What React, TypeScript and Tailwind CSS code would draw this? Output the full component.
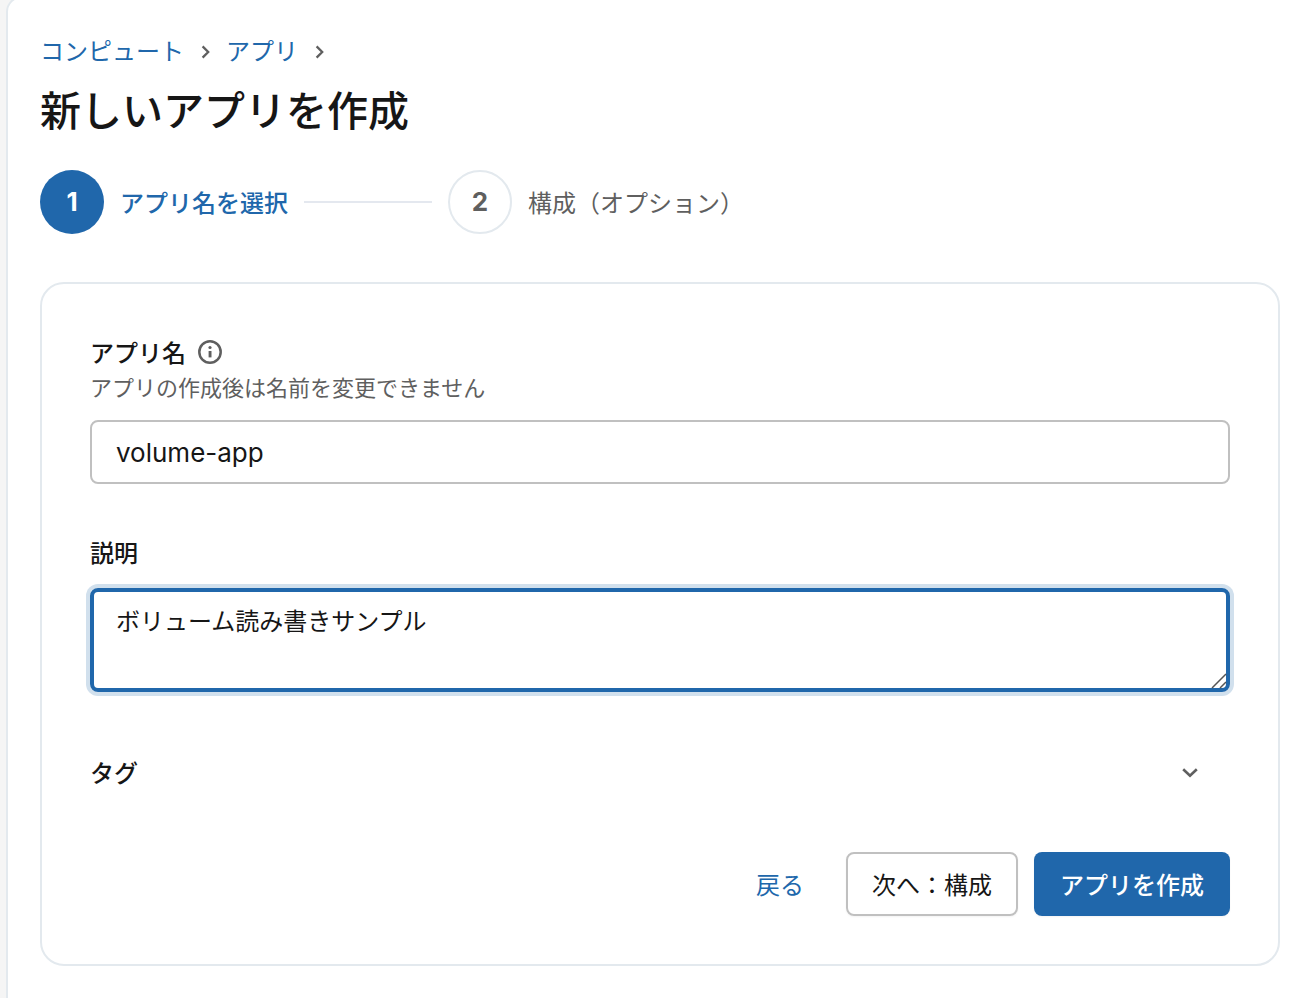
import { useState } from "react";

const steps = [
  { id: 1, label: "アプリ名を選択" },
  { id: 2, label: "構成（オプション）" },
];

const breadcrumbs = ["コンピュート", "アプリ"];

function ChevronRight() {
  return (
    <svg viewBox="0 0 24 24" className="h-6 w-6 shrink-0 text-[#5f5f5f]" fill="none" stroke="currentColor" strokeWidth="2.3" aria-hidden="true">
      <path d="m9.6 8.4 5.6 5.6-5.6 5.6" />
    </svg>
  );
}

function ChevronDown({ open }: { open: boolean }) {
  return (
    <svg
      viewBox="0 0 24 24"
      className={`h-6 w-6 shrink-0 text-[#5f5f5f] ${open ? "rotate-180" : ""}`}
      fill="none"
      stroke="currentColor"
      strokeWidth="2.6"
      aria-hidden="true"
    >
      <path d="m5.2 9.2 6.8 6.6 6.8-6.6" />
    </svg>
  );
}

function InfoIcon() {
  return (
    <svg viewBox="0 0 24 24" className="h-6 w-6 text-[#5f5f5f]" aria-hidden="true">
      <circle cx="12" cy="12" r="10.7" fill="none" stroke="currentColor" strokeWidth="2.5" />
      <circle cx="12" cy="7.5" r="1.6" fill="currentColor" />
      <path d="M10.6 11h2.9v6.4h-2.9z" fill="currentColor" />
    </svg>
  );
}

function Stepper({ current }: { current: number }) {
  return (
    <ol className="mt-9 flex items-center gap-4">
      {steps.map((step, i) => {
        const active = step.id === current;
        return (
          <li key={step.id} className="flex items-center gap-4">
            {i > 0 && <span className="h-[2px] w-32 bg-[#e4e8ef]" />}
            <span
              className={`flex h-16 w-16 shrink-0 items-center justify-center rounded-full font-[Inter,sans-serif] text-[26px] font-bold ${
                active ? "bg-[#2067ab] text-white" : "border-2 border-[#e3e9ee] text-[#5f5f5f]"
              }`}
            >
              {step.id}
            </span>
            <span className={active ? "font-medium text-[#2067ab]" : "text-[#5f5f5f]"}>{step.label}</span>
          </li>
        );
      })}
    </ol>
  );
}

export default function App() {
  const [name, setName] = useState("volume-app");
  const [description, setDescription] = useState("ボリューム読み書きサンプル");
  const [tagsOpen, setTagsOpen] = useState(false);

  return (
    <div className="flex min-h-screen overflow-hidden bg-[#f5f5f5] pl-[6px] font-['Noto_Sans_CJK_JP',sans-serif] text-2xl leading-10 text-[#161616]">
      <main className="-mt-1 min-w-0 grow rounded-tl-2xl border-t-2 border-l-2 border-[#e3e9ee] bg-white pt-8 pr-7 pb-8 pl-8">
        {/* Breadcrumb */}
        <nav aria-label="Breadcrumb" className="flex items-center">
          {breadcrumbs.map((crumb) => (
            <span key={crumb} className="flex items-center gap-[9px] pr-[9px]">
              <a href="#" className="text-[#2067ab] hover:underline">
                {crumb}
              </a>
              <ChevronRight />
            </span>
          ))}
        </nav>

        <h1 className="mt-3 text-[41px] leading-[52px] font-medium">新しいアプリを作成</h1>

        <Stepper current={1} />

        <form
          className="mt-12 rounded-3xl border-2 border-[#e3e9ee] p-12"
          onSubmit={(e) => e.preventDefault()}
        >
          {/* App name */}
          <div className="flex items-center gap-3">
            <label htmlFor="app-name" className="font-medium">
              アプリ名
            </label>
            <InfoIcon />
          </div>
          <p id="app-name-hint" className="text-[22px] leading-7 text-[#5f5f5f]">
            アプリの作成後は名前を変更できません
          </p>
          <input
            id="app-name"
            type="text"
            value={name}
            onChange={(e) => setName(e.target.value)}
            aria-describedby="app-name-hint"
            className="mt-5 block h-16 w-full rounded-lg border-2 border-[#c0c0c0] px-6 font-[Inter,'Noto_Sans_CJK_JP',sans-serif] text-[26px] outline-none"
          />

          {/* Description */}
          <label htmlFor="app-description" className="mt-12 block font-medium">
            説明
          </label>
          <div className="relative mt-4">
            <textarea
              id="app-description"
              value={description}
              onChange={(e) => setDescription(e.target.value)}
              className="block h-[104px] w-full resize-none rounded-lg border-4 border-[#2067ab] px-[22px] py-2 ring-4 ring-[#d1e0ed] outline-none"
            />
            <svg viewBox="0 0 16 16" className="pointer-events-none absolute right-[3px] bottom-[3px] h-4 w-4" fill="none" stroke="#555" strokeWidth="1.5" aria-hidden="true">
              <path d="M1 15 15 1M9 15l6-6" />
            </svg>
          </div>

          {/* Tags */}
          <button
            type="button"
            aria-expanded={tagsOpen}
            onClick={() => setTagsOpen(!tagsOpen)}
            className="mt-12 flex h-16 w-full items-center justify-between pr-7 font-medium"
          >
            タグ
            <ChevronDown open={tagsOpen} />
          </button>

          {/* Actions */}
          <div className="mt-12 flex justify-end gap-4">
            <button type="button" className="h-16 rounded-lg px-[26px] text-[#2067ab]">
              戻る
            </button>
            <button type="button" className="h-16 rounded-lg border-2 border-[#c0c0c0] px-6 shadow-xs">
              次へ：構成
            </button>
            <button type="submit" className="h-16 rounded-lg bg-[#2067ab] px-[26px] font-medium text-white shadow-xs">
              アプリを作成
            </button>
          </div>
        </form>
      </main>
    </div>
  );
}
